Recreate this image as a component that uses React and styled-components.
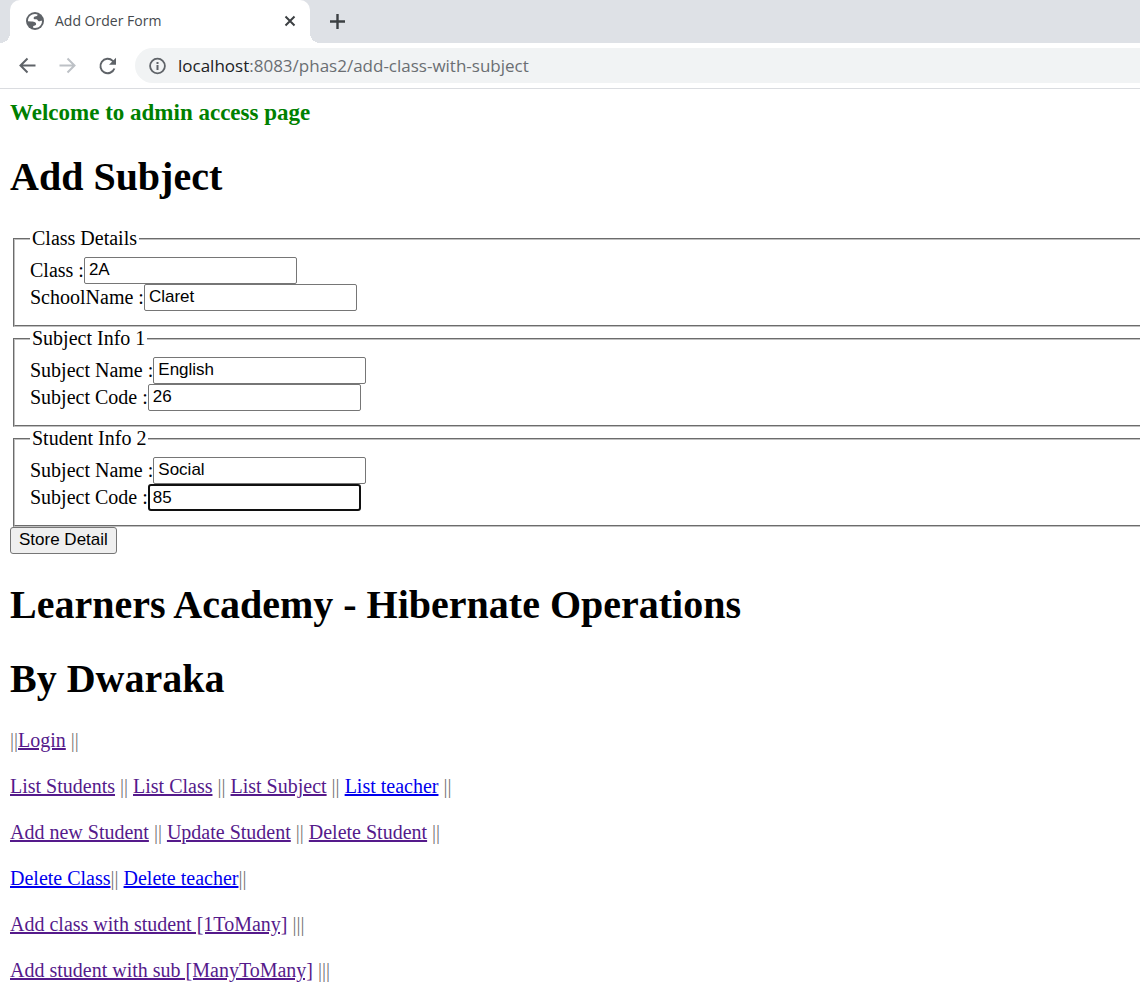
import React from "react";
import styled, { createGlobalStyle } from "styled-components";

const GlobalStyle = createGlobalStyle`
  *, *::before, *::after { box-sizing: border-box; }
  body { margin: 0; background: #fff; color: #000; }
`;

const Browser = styled.div`
  overflow-x: clip;
`;

const TabStrip = styled.div`
  display: flex;
  align-items: center;
  height: 43px;
  padding-left: 10px;
  background: #dee1e6;
`;

const Tab = styled.div`
  position: relative;
  display: flex;
  align-items: center;
  width: 300px;
  height: 43px;
  padding: 0 12px 2px 15px;
  border-radius: 10px 10px 0 0;
  background: #fff;
  color: #5f6368;

  &::before, &::after {
    content: "";
    position: absolute;
    bottom: 0;
    width: 10px;
    height: 10px;
  }
  &::before {
    left: -10px;
    background: radial-gradient(circle at 0 0, transparent 10px, #fff 10px);
  }
  &::after {
    right: -10px;
    background: radial-gradient(circle at 100% 0, transparent 10px, #fff 10px);
  }
`;

const TabTitle = styled.span`
  flex: 1;
  margin-left: 10px;
  font: 14px/20px "Open Sans", sans-serif;
  color: #45494d;
`;

const IconButton = styled.button`
  display: flex;
  align-items: center;
  justify-content: center;
  width: ${(p) => p.$width}px;
  height: 24px;
  padding: 0;
  border: 0;
  background: none;
  color: ${(p) => p.$color || "#5f6368"};
`;

const NewTab = styled(IconButton)`
  margin-left: 15px;
`;

const Toolbar = styled.div`
  display: flex;
  align-items: center;
  height: 46px;
  padding-left: 7px;
  border-bottom: 1px solid #dadce0;
`;

const AddressBar = styled.div`
  display: flex;
  flex: 1;
  align-items: center;
  gap: 10px;
  height: 35px;
  margin: 0 -20px 0 8px;
  padding: 0 13px;
  border-radius: 18px;
  background: #f1f3f4;
  color: #5f6368;
`;

const Url = styled.span`
  font: 17px/24px "Open Sans", sans-serif;
  color: #6a6e72;
`;

const Host = styled.span`
  color: #202124;
`;

const Page = styled.main`
  padding: 10px;
  font: 20px/23px "Liberation Serif", "Times New Roman", serif;
`;

const Welcome = styled.h3`
  margin: 0 0 28px;
  font-size: 23px;
  line-height: 27px;
  color: green;
`;

const Heading = styled.h1`
  margin: 0;
  font-size: 40px;
  line-height: 46px;
`;

const Banner = styled.header`
  display: grid;
  gap: 28px;
  margin-bottom: 27px;
`;

const Form = styled.form`
  margin: 27px -30px 28px 0;
`;

const Group = styled.fieldset`
  margin: 0 3px;
  padding: 7px 15px 14px;
  border: 2px groove #c0c0c0;
`;

const Legend = styled.legend`
  padding: 0 2px;
`;

const Field = styled.div`
  display: flex;
  align-items: center;
  height: 27px;
`;

const TextInput = styled.input`
  width: 213px;
  height: 27px;
  padding: ${(p) => (p.$active ? "0 3px" : "0 4px 1px")};
  border: ${(p) => (p.$active ? "2px solid #101010" : "1px solid #767676")};
  border-radius: ${(p) => (p.$active ? 3 : 2)}px;
  outline: 0;
  background: #fff;
  color: #000;
  font: 17px "Liberation Sans", Arial, sans-serif;
`;

const Submit = styled.button`
  display: block;
  height: 27px;
  padding: 0 8px 2px;
  border: 1px solid #767676;
  border-radius: 3px;
  background: #efefef;
  color: #000;
  font: 17px "Liberation Sans", Arial, sans-serif;
`;

const LinkRow = styled.p`
  margin: 0 0 23px;
  color: #777;
`;

const Link = styled.a`
  color: ${(p) => (p.$fresh ? "#0000ee" : "#551a8b")};
`;

const LineIcon = ({ d, size, weight = 2 }) => (
  <svg width={size} height={size} viewBox={`0 0 ${size} ${size}`} fill="none" stroke="currentColor" strokeWidth={weight} aria-hidden="true">
    <path d={d} />
  </svg>
);

const GlobeIcon = () => (
  <svg width="20" height="20" viewBox="0 0 20 20" aria-hidden="true">
    <circle cx="10" cy="10" r="9" fill="currentColor" />
    <path
      fill="#fff"
      d="M3 10.200C2.900 6 6 3 10 3L12.500 3.500C12.700 5 11.500 5.300 10 5.600C8.900 5.900 8.600 6.600 8.700 7.400C8.800 8.300 10 8 11.500 8.200C13 8.500 12.800 10.200 14 10.300C15.200 10.400 15.800 9.400 17 9.700C17.100 13.500 14.500 16.900 10 17L8.200 16.800C7.800 15.200 8.500 14.800 10 14.600C11.500 14.300 11.400 12.600 10.400 11.600C9.200 10.500 8 10.400 6.500 10.400Z"
    />
  </svg>
);

const ReloadIcon = () => (
  <svg width="24" height="24" viewBox="0 0 24 24" fill="none" aria-hidden="true">
    <path d="M19.400 14.500A7.200 7.200 0 1 1 17.700 6.900L19 8.200" stroke="currentColor" strokeWidth="2" />
    <path d="M21 3.800V10.800H14Z" fill="currentColor" />
  </svg>
);

const InfoIcon = () => (
  <svg width="20" height="20" viewBox="0 0 20 20" fill="none" aria-hidden="true">
    <circle cx="9.500" cy="10" r="7.400" stroke="currentColor" strokeWidth="1.800" />
    <path d="M9.500 9V14M9.500 6V8" stroke="currentColor" strokeWidth="2" />
  </svg>
);

const groups = [
  { legend: "Class Details", fields: [["Class :", "2A"], ["SchoolName :", "Claret"]] },
  { legend: "Subject Info 1", fields: [["Subject Name :", "English"], ["Subject Code :", "26"]] },
  { legend: "Student Info 2", fields: [["Subject Name :", "Social"], ["Subject Code :", "85", true]] },
];

export default function App() {
  return (
    <Browser>
      <GlobalStyle />
      <TabStrip>
        <Tab>
          <GlobeIcon />
          <TabTitle>Add Order Form</TabTitle>
          <IconButton $width={16} $color="#3c4043" aria-label="Close tab">
            <LineIcon size={16} d="M3.500 3.500L12.500 12.500M12.500 3.500L3.500 12.500" />
          </IconButton>
        </Tab>
        <NewTab $width={24} $color="#3c4043" aria-label="New tab">
          <LineIcon size={24} weight={2.4} d="M12.500 4V19M5 11.500H20" />
        </NewTab>
      </TabStrip>
      <Toolbar>
        <IconButton $width={40} aria-label="Back">
          <LineIcon size={24} d="M20.500 11.500H5.500M12.500 4.500L5.500 11.500L12.500 18.500" />
        </IconButton>
        <IconButton $width={40} $color="#bdc1c6" aria-label="Forward">
          <LineIcon size={24} d="M4.500 11.500H19.500M12.500 4.500L19.500 11.500L12.500 18.500" />
        </IconButton>
        <IconButton $width={40} aria-label="Reload"><ReloadIcon /></IconButton>
        <AddressBar>
          <InfoIcon />
          <Url><Host>localhost</Host>:8083/phas2/add-class-with-subject</Url>
        </AddressBar>
      </Toolbar>
      <Page>
        <Welcome>Welcome to admin access page</Welcome>
        <Heading>Add Subject</Heading>
        <Form onSubmit={(e) => e.preventDefault()}>
          {groups.map((group, g) => (
            <Group key={group.legend}>
              <Legend>{group.legend}</Legend>
              {group.fields.map(([label, value, active], f) => (
                <Field key={label}>
                  <label htmlFor={`field-${g}-${f}`}>{label}</label>
                  <TextInput id={`field-${g}-${f}`} type="text" defaultValue={value} $active={active} />
                </Field>
              ))}
            </Group>
          ))}
          <Submit type="submit">Store Detail</Submit>
        </Form>
        <Banner>
          <Heading>Learners Academy - Hibernate Operations</Heading>
          <Heading>By Dwaraka</Heading>
        </Banner>
        <LinkRow>||<Link href="#login">Login</Link> ||</LinkRow>
        <LinkRow>
          <Link href="#list-students">List Students</Link> || <Link href="#list-class">List Class</Link> ||{" "}
          <Link href="#list-subject">List Subject</Link> || <Link href="#list-teacher" $fresh>List teacher</Link> ||
        </LinkRow>
        <LinkRow>
          <Link href="#add-student">Add new Student</Link> || <Link href="#update-student">Update Student</Link> ||{" "}
          <Link href="#delete-student">Delete Student</Link> ||
        </LinkRow>
        <LinkRow>
          <Link href="#delete-class" $fresh>Delete Class</Link>|| <Link href="#delete-teacher" $fresh>Delete teacher</Link>||
        </LinkRow>
        <LinkRow><Link href="#add-class-with-student">Add class with student [1ToMany]</Link> |||</LinkRow>
        <LinkRow><Link href="#add-student-with-sub">Add student with sub [ManyToMany]</Link> |||</LinkRow>
      </Page>
    </Browser>
  );
}
